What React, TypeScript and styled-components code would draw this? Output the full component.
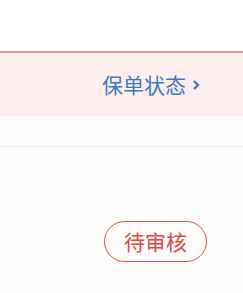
import React from "react";
import styled, { createGlobalStyle } from "styled-components";

const Global = createGlobalStyle`
  html, body { margin: 0; padding: 0; background: #fdfcfd; }
  body { font-family: "Noto Sans CJK SC", "Noto Sans", sans-serif; }
`;

const Page = styled.div`
  width: 243px;
  height: 293px;
  overflow: hidden;
  display: flex;
  flex-direction: column;
`;

const TopSpace = styled.div`
  height: 51px;
  background: #ffffff;
`;

const StatusBar = styled.div`
  height: 63px;
  background: #ffeeee;
  border-top: 2px solid #f28e8e;
  display: flex;
  align-items: center;
  padding-left: 102px;
`;

const StatusLink = styled.a`
  display: inline-flex;
  align-items: center;
  gap: 6px;
  color: #3b79c6;
  font-size: 21px;
  text-decoration: none;
  line-height: 1;
`;

const Section = styled.div`
  height: 30px;
  border-bottom: 1px solid #ebeaeb;
`;

const Body = styled.div`
  flex: 1;
  padding: 74px 0 0 104px;
`;

const Badge = styled.span`
  display: inline-flex;
  align-items: center;
  justify-content: center;
  box-sizing: border-box;
  width: 103px;
  height: 41px;
  border: 1px solid #de5149;
  border-radius: 21px;
  color: #de4a40;
  font-size: 21px;
  line-height: 1;
`;

const Chevron = () => (
  <svg width="8" height="12" viewBox="0 0 8 12" fill="none">
    <path d="M2 2l4 4-4 4" stroke="#3b79c6" strokeWidth="2.2" />
  </svg>
);

export default function App() {
  return (
    <Page>
      <Global />
      <TopSpace />
      <StatusBar>
        <StatusLink>
          保单状态
          <Chevron />
        </StatusLink>
      </StatusBar>
      <Section />
      <Body>
        <Badge>待审核</Badge>
      </Body>
    </Page>
  );
}
